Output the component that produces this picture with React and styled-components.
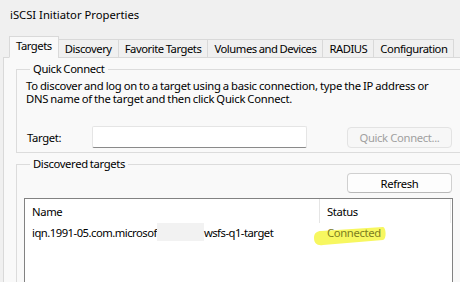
import React from "react";
import styled, { createGlobalStyle } from "styled-components";

const Global = createGlobalStyle`
  html, body { margin: 0; padding: 0; background: #f0f0f0; }
  body {
    font-family: "Noto Sans", "Open Sans", sans-serif;
    font-size: 11.25px;
    letter-spacing: -0.35px;
    word-spacing: -0.5px;
    color: #000;
  }
  * { box-sizing: border-box; }
`;

const Viewport = styled.div`
  width: 460px;
  height: 282px;
  overflow: hidden;
  background: #f0f0f0;
`;

const Dialog = styled.div`
  width: 472px;
  display: flex;
  flex-direction: column;
`;

const Title = styled.div`
  height: 36px;
  padding: 7px 0 0 10px;
  line-height: 16px;
  letter-spacing: 0;
  word-spacing: 0;
  color: #000;
`;

const TabStrip = styled.div`
  display: flex;
  align-items: flex-end;
  padding-left: 10px;
  height: 22px;
  position: relative;
  z-index: 1;
  margin-bottom: -1px;
  letter-spacing: -0.45px;
`;

const Tab = styled.div`
  height: ${(p) => (p.$active ? "22px" : "19px")};
  padding: 0 6px;
  display: flex;
  align-items: center;
  line-height: 16px;
  padding-bottom: ${(p) => (p.$active ? "2px" : "0")};
  background: ${(p) => (p.$active ? "#f9f9f9" : "#f0f0f0")};
  border: 1px solid #d9d9d9;
  border-bottom: ${(p) => (p.$active ? "1px solid #f9f9f9" : "1px solid #d9d9d9")};
  margin-left: -1px;
  white-space: nowrap;
`;

const Panel = styled.div`
  margin-left: 3px;
  background: #f9f9f9;
  border: 1px solid #d9d9d9;
  padding: 3px 0 0 12px;
  display: flex;
  flex-direction: column;
  gap: 3px;
  height: 260px;
`;

const Group = styled.fieldset`
  margin: 0;
  border: 1px solid #dcdcdc;
  border-right: none;
  padding: 0 0 0 9px;
  display: flex;
  flex-direction: column;
`;

const Legend = styled.legend`
  padding: 0 3px;
  margin-left: 4px;
  line-height: 16px;
`;

const Desc = styled.p`
  margin: 2px 0 0 0;
  line-height: 13px;
  width: 405px;
  letter-spacing: -0.25px;
`;

const FormRow = styled.div`
  display: flex;
  align-items: center;
  margin-top: 21px;
  margin-bottom: 4px;
  padding-right: 19px;
`;

const Label = styled.span`
  width: 66px;
  padding-left: 1px;
`;

const Input = styled.div`
  width: 215px;
  height: 22px;
  background: #fff;
  border: 1px solid #e5e5e5;
  border-bottom: 1px solid #8a8a8a;
  border-radius: 2px;
`;

const Button = styled.button`
  margin-left: auto;
  width: 105px;
  height: ${(p) => p.$h || 21}px;
  font: inherit;
  letter-spacing: inherit;
  color: ${(p) => (p.disabled ? "#a0a0a0" : "#000")};
  background: ${(p) => (p.disabled ? "#f7f7f7" : "#fdfdfd")};
  border: 1px solid ${(p) => (p.disabled ? "#e3e3e3" : "#d0d0d0")};
  border-bottom-color: ${(p) => (p.disabled ? "#e3e3e3" : "#b8b8b8")};
  border-radius: 4px;
  padding: 0;
`;

const GroupTop = styled.div`
  display: flex;
  padding: 1px 19px 5px 0;
`;

const ListBox = styled.div`
  width: 429px;
  margin-left: -2px;
  height: 100px;
  background: #fff;
  border: 1px solid #828282;
  border-bottom: none;
  position: relative;
`;

const Header = styled.div`
  display: grid;
  grid-template-columns: 295px 1fr;
  height: 24px;
`;

const HeadCell = styled.div`
  padding: 5px 0 0 7px;
  line-height: 16px;
  border-right: 1px solid ${(p) => (p.$last ? "#ececec" : "#e5e5e5")};
  margin-right: ${(p) => (p.$last ? "1px" : "0")};
`;

const Row = styled.div`
  display: grid;
  grid-template-columns: 295px 1fr;
  height: 18px;
  align-items: center;
`;

const Cell = styled.div`
  padding-left: 7px;
  display: flex;
  align-items: center;
  white-space: nowrap;
  position: relative;
  letter-spacing: ${(p) => (p.$tight ? "-0.5px" : "inherit")};
`;

const Redacted = styled.span`
  display: inline-block;
  width: 47px;
  height: 18px;
  background: #f2f2f2;
`;

const Status = styled.span`
  position: relative;
  color: #7d7d1e;
`;

const Highlight = styled.svg`
  position: absolute;
  left: -14px;
  top: 0;
  width: 74px;
  height: 22px;
  z-index: 0;
  pointer-events: none;
`;

const StatusText = styled.span`
  position: relative;
  z-index: 1;
`;

export default function App() {
  return (
    <>
      <Global />
      <Viewport>
        <Dialog>
          <Title>iSCSI Initiator Properties</Title>
          <TabStrip>
            <Tab $active>Targets</Tab>
            <Tab>Discovery</Tab>
            <Tab>Favorite Targets</Tab>
            <Tab>Volumes and Devices</Tab>
            <Tab>RADIUS</Tab>
            <Tab>Configuration</Tab>
          </TabStrip>
          <Panel>
            <Group>
              <Legend>Quick Connect</Legend>
              <Desc>
                To discover and log on to a target using a basic connection, type the IP address or
                DNS name of the target and then click Quick Connect.
              </Desc>
              <FormRow>
                <Label>Target:</Label>
                <Input />
                <Button disabled>Quick Connect...</Button>
              </FormRow>
            </Group>
            <Group>
              <Legend>Discovered targets</Legend>
              <GroupTop>
                <Button $h={20}>Refresh</Button>
              </GroupTop>
              <ListBox>
                <Header>
                  <HeadCell>Name</HeadCell>
                  <HeadCell $last>Status</HeadCell>
                </Header>
                <Row>
                  <Cell $tight>
                    iqn.1991-05.com.microsof
                    <Redacted />
                    wsfs-q1-target
                  </Cell>
                  <Cell>
                    <Status>
                      <Highlight viewBox="0 0 74 22">
                        <path
                          d="M1 13 C1 8, 4 6, 8 6 L70 2 C73 2, 74 14, 70 15 L10 20 C4 21, 1 18, 1 13 Z"
                          fill="#f7f760"
                        />
                      </Highlight>
                      <StatusText>Connected</StatusText>
                    </Status>
                  </Cell>
                </Row>
              </ListBox>
            </Group>
          </Panel>
        </Dialog>
      </Viewport>
    </>
  );
}
